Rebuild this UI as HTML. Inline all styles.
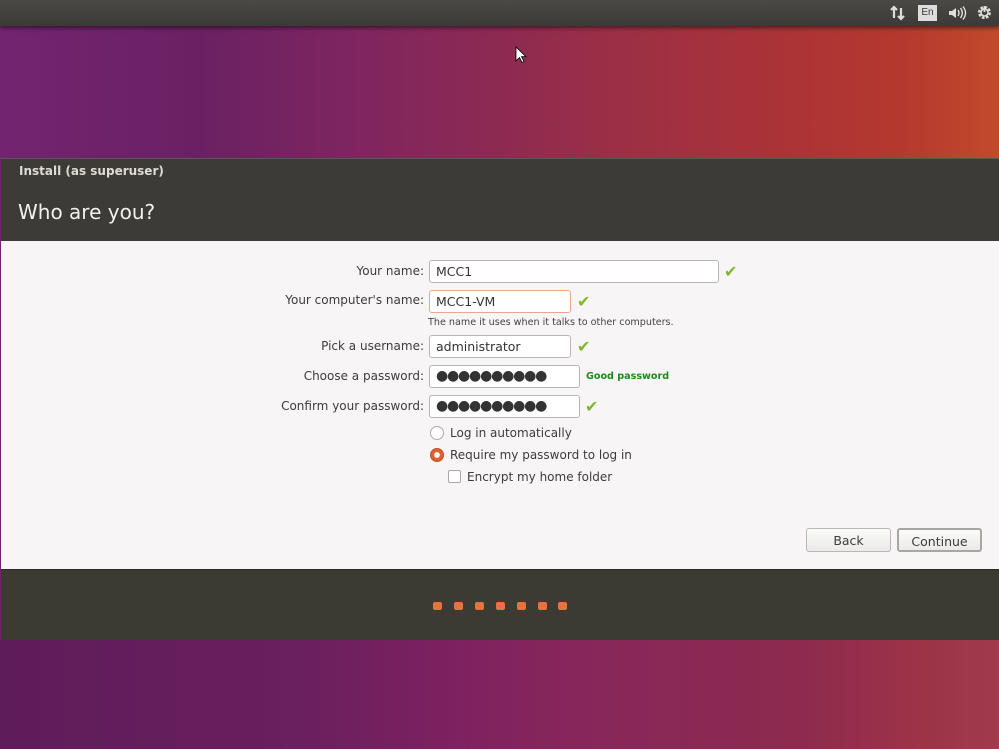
<!DOCTYPE html>
<html><head><meta charset="utf-8"><style>
*{margin:0;padding:0;box-sizing:border-box}
body{width:999px;height:749px;overflow:hidden;position:relative;font-family:"DejaVu Sans","Liberation Sans",sans-serif;
background:linear-gradient(90deg,#732470 0%,#6a2163 20%,#7e2560 35%,#8d2a52 50%,#9c2f45 62%,#a8323a 75%,#b5382e 90%,#c24a2c 100%);}
.bot{position:absolute;left:0;top:640px;width:999px;height:109px;background:linear-gradient(90deg,#5f1c5a 0%,#6a1f5e 30%,#7d2160 45%,#88275a 60%,#8e2a4e 80%,#9c3348 92%,#9f3b4c 100%)}
.top{position:absolute;left:0;top:0;width:999px;height:26px;background:linear-gradient(#4a4945,#3b3a36);box-shadow:0 2px 4px rgba(0,0,0,.5)}
.win{position:absolute;left:1px;top:158px;width:998px;height:482px;}
.tb{height:25px;background:#3c3b37;color:#dfdbd2;font-size:12px;font-weight:bold;padding:5px 0 0 18px;border-top:1px solid #5a5955}
.hd{height:58px;background:#3c3b37;color:#f2f1f0;font-size:20px;padding:17px 0 0 17px}
.ct{height:328px;background:#f7f5f6;position:relative;color:#3c3c3c;font-size:12px}
.ft{height:71px;background:#3b3a33;position:relative;border-top:1px solid #2a2a27}
.lbl{position:absolute;right:575px;text-align:right;white-space:nowrap}
.in{position:absolute;height:23px;border:1px solid #b8b6b2;border-radius:3px;background:#fff;padding:3px 0 0 6px;font-size:12.5px;color:#333}
.ck{position:absolute;color:#7cb82a;font-size:16px;font-weight:bold}
.dot{position:absolute;width:9px;height:8px;background:#e9713e;border-radius:2px;top:32px}
.btn{position:absolute;height:24px;border:1px solid #b9b7b3;border-radius:3px;background:linear-gradient(#fbfbfa,#ebeae8);text-align:center;font-size:12.5px;padding-top:4px;color:#3c3c3c}
.rad{position:absolute;width:14px;height:14px;border-radius:50%;border:1px solid #aaa;background:#fff}
.pw{letter-spacing:-1.2px;font-size:14px;padding-top:2px}
</style></head><body>
<div class="bot"></div>
<div class="top">
<svg style="position:absolute;left:890px;top:5px" width="16" height="16"><path d="M4 2v11M1 5l3-3 3 3M11 14V3M8 11l3 3 3-3" stroke="#ddd" stroke-width="2.2" fill="none"/></svg>
<div style="position:absolute;left:918px;top:5px;width:19px;height:16px;background:#ddd;color:#3b3a36;font-size:10px;text-align:center;line-height:16px;font-family:'Liberation Sans',sans-serif">En</div>
<svg style="position:absolute;left:947px;top:5px" width="20" height="16"><path d="M2 6h3l4-3v10l-4-3H2z" fill="#ddd"/><path d="M11 5q2 3 0 6M13.5 3q3.5 5 0 10M16 1.5q5 6.5 0 13" stroke="#ddd" stroke-width="1.4" fill="none"/></svg>
<svg style="position:absolute;left:976px;top:4px" width="17" height="17"><circle cx="8.5" cy="8.5" r="5" stroke="#ddd" stroke-width="3" fill="none" stroke-dasharray="2.5 1.4"/><circle cx="8.5" cy="8.5" r="3.5" stroke="#ddd" stroke-width="1.6" fill="none"/><path d="M8.5 2v6" stroke="#ddd" stroke-width="1.8"/></svg>
</div>
<svg style="position:absolute;left:515px;top:46px" width="12" height="18"><path d="M1 1v14l3.5-3.5 2.5 5 2-1-2.5-4.8H11z" fill="#fff" stroke="#000" stroke-width=".8"/></svg>
<div class="win">
<div class="tb">Install (as superuser)</div>
<div class="hd">Who are you?</div>
<div class="ct">
<div class="lbl" style="top:23px">Your name:</div>
<div class="in" style="left:428px;top:19px;width:290px">MCC1</div>
<div class="ck" style="left:723px;top:21px">✔</div>
<div class="lbl" style="top:52px">Your computer's name:</div>
<div class="in" style="left:428px;top:49px;width:142px;border-color:#e8a78f">MCC1-VM</div>
<div class="ck" style="left:576px;top:51px">✔</div>
<div style="position:absolute;left:427px;top:76px;font-size:9.6px;color:#444">The name it uses when it talks to other computers.</div>
<div class="lbl" style="top:98px">Pick a username:</div>
<div class="in" style="left:428px;top:94px;width:142px">administrator</div>
<div class="ck" style="left:576px;top:96px">✔</div>
<div class="lbl" style="top:128px">Choose a password:</div>
<div class="in pw" style="left:428px;top:124px;width:151px">●●●●●●●●●●</div>
<div style="position:absolute;left:585px;top:130px;font-size:9.6px;color:#1c8a1c;font-weight:bold">Good password</div>
<div class="lbl" style="top:158px">Confirm your password:</div>
<div class="in pw" style="left:428px;top:154px;width:151px">●●●●●●●●●●</div>
<div class="ck" style="left:584px;top:156px">✔</div>
<div class="rad" style="left:429px;top:185px"></div>
<div style="position:absolute;left:449px;top:185px">Log in automatically</div>
<div class="rad" style="left:429px;top:207px;border-color:#c4502a;background:radial-gradient(circle,#fff 0 2.5px,#e0602e 3.2px)"></div>
<div style="position:absolute;left:449px;top:207px">Require my password to log in</div>
<div style="position:absolute;left:447px;top:229px;width:13px;height:13px;border:1px solid #aaa;border-radius:2px;background:#fff"></div>
<div style="position:absolute;left:466px;top:229px">Encrypt my home folder</div>
<div class="btn" style="left:805px;top:287px;width:85px">Back</div>
<div class="btn" style="left:896px;top:287px;width:85px;border:2px solid #a9a7a3">Continue</div>
</div>
<div class="ft">
<div class="dot" style="left:432px"></div><div class="dot" style="left:453px"></div><div class="dot" style="left:474px"></div><div class="dot" style="left:495px"></div><div class="dot" style="left:516px"></div><div class="dot" style="left:537px"></div><div class="dot" style="left:557px"></div>
</div>
</div>
</body></html>
